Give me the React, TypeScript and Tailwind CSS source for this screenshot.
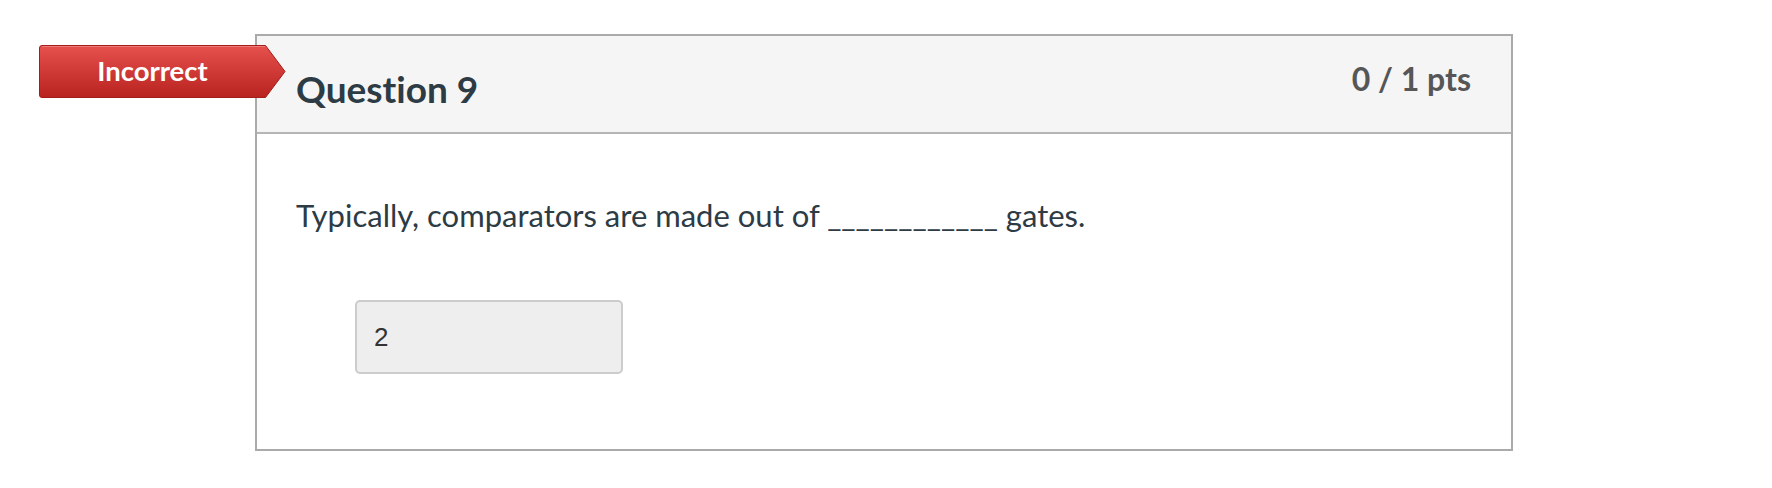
import React from 'react';

const IncorrectBadge: React.FC = () => (
  <div className="absolute left-[39px] top-[45px] w-[247px] h-[53px]">
    <svg width="247" height="53" viewBox="0 0 247 53" className="absolute inset-0">
      <defs>
        <linearGradient id="badgeFill" x1="0" y1="0" x2="0" y2="1">
          <stop offset="0" stopColor="#e6514e" />
          <stop offset="1" stopColor="#b8221f" />
        </linearGradient>
      </defs>
      <path
        d="M3 0.5 H226.5 L246 26.5 L226.5 52.5 H3 Q0.5 52.5 0.5 50 V3 Q0.5 0.5 3 0.5 Z"
        fill="url(#badgeFill)"
        stroke="#a51d1b"
        strokeWidth="1"
      />
      <path d="M3 1.5 H226" stroke="#ef7b78" strokeWidth="1" />
    </svg>
    <div className="relative flex h-full w-[227px] items-center justify-center pb-[1px]">
      <span className="text-[27.5px] font-bold leading-none text-white">Incorrect</span>
    </div>
  </div>
);

export default function App() {
  return (
    <div className="relative h-[488px] w-[1772px] bg-white font-['Lato',_sans-serif] [font-variant-ligatures:none]">
      <div className="pl-[255px] pt-[34px]">
        <div className="w-[1258px] border-2 border-[#aaaaaa]">
          {/* Header */}
          <div className="flex h-[98px] items-start justify-between border-b-2 border-[#b5b5b5] bg-[#f5f5f5] pl-[39px] pr-[40px]">
            <h2 className="pt-[34px] text-[37px] font-bold leading-[37px] text-[#2d3b45]">Question 9</h2>
            <div className="pt-[27px] text-[32px] font-bold leading-[32px] text-[#565656]">0 / 1 pts</div>
          </div>

          {/* Body */}
          <div className="pl-[39px] pr-[40px] pt-[66px] pb-[75px]">
            <p className="text-[31px] leading-[31px] text-[#2d3b45]">
              Typically, comparators are made out of ____________ gates.
            </p>
            <div className="mt-[69px] ml-[59px] flex h-[74px] w-[268px] items-center rounded-[5px] border-2 border-[#cccccc] bg-[#eeeeee] pl-[17px]">
              <span className="font-['Liberation_Sans',_Arial,_sans-serif] text-[26px] text-[#333333]">2</span>
            </div>
          </div>
        </div>
      </div>
      <IncorrectBadge />
    </div>
  );
}
